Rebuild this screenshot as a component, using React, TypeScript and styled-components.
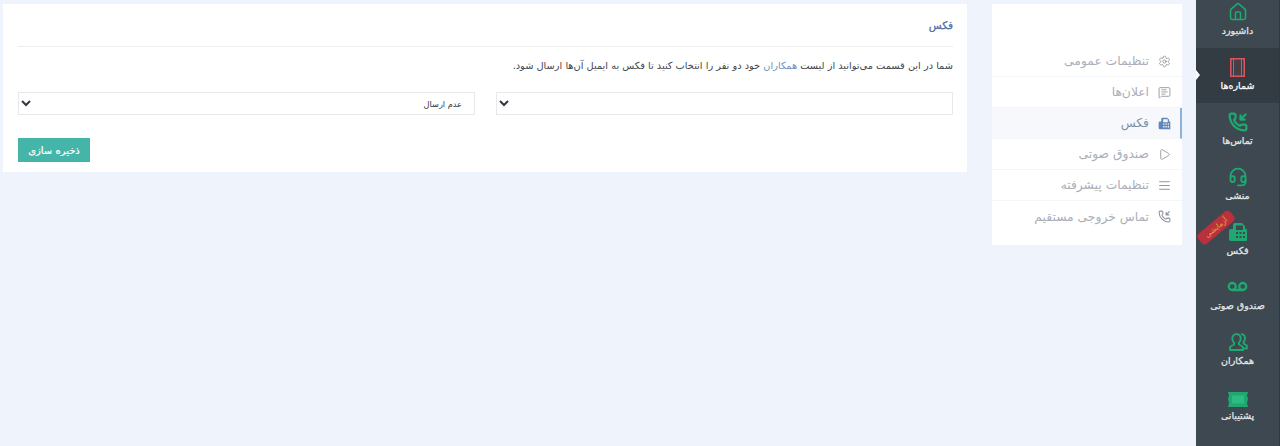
import React from "react";
import styled, { createGlobalStyle } from "styled-components";
import { Settings, MessageSquareText, Play, AlignJustify, Home, Headset, Voicemail } from "lucide-react";

const GlobalStyle = createGlobalStyle`
  html, body {
    margin: 0;
    height: 446px;
    overflow: hidden;
    background: #eff3fb;
    font-family: "DejaVu Sans", "Noto Sans", sans-serif;
  }
`;

const Page = styled.div`
  display: flex;
  direction: rtl;
  height: 446px;
  overflow: hidden;
`;

const Sidebar = styled.nav`
  width: 83px;
  flex: none;
  background: #3d4850;
  border-right: 1px solid #2f383e;
  overflow: hidden;
`;

const SidebarList = styled.div`
  margin-top: -7px;
  display: flex;
  flex-direction: column;
`;

const SidebarItem = styled.a<{ $active?: boolean }>`
  position: relative;
  height: 55px;
  display: flex;
  flex-direction: column;
  align-items: center;
  justify-content: flex-end;
  padding-bottom: 12px;
  box-sizing: border-box;
  gap: 3px;
  font-size: 9.5px;
  -webkit-text-stroke: 0.25px currentColor;
  white-space: nowrap;
  background: ${(p) => (p.$active ? "#333c43" : "transparent")};
  color: ${(p) => (p.$active ? "#ffffff" : "#e4e8ea")};
  svg {
    color: #1fa871;
  }
  ${(p) =>
    p.$active &&
    `&::before {
      content: "";
      position: absolute;
      left: 0;
      top: 22px;
      border-left: 4px solid #ffffff;
      border-top: 5px solid transparent;
      border-bottom: 5px solid transparent;
    }`}
`;

const Ribbon = styled.span`
  position: absolute;
  left: -1px;
  top: 8px;
  width: 42px;
  height: 13px;
  line-height: 13px;
  border-radius: 4px;
  background: #b9313c;
  color: #eda23c;
  font-size: 7.5px;
  -webkit-text-stroke: 0;
  text-align: center;
  transform: rotate(-40deg);
`;

const SideMenu = styled.aside`
  width: 190px;
  height: 241px;
  flex: none;
  margin: 4px 14px 0 25px;
  padding-top: 42px;
  box-sizing: border-box;
  background: #ffffff;
`;

const MenuRow = styled.a<{ $active?: boolean }>`
  height: 31px;
  display: flex;
  align-items: center;
  gap: 9px;
  box-sizing: border-box;
  font-size: 12.3px;
  white-space: nowrap;
  border-bottom: 1px solid #f4f5f8;
  background: ${(p) => (p.$active ? "#f6f8fc" : "#ffffff")};
  border-right: ${(p) => (p.$active ? "2px solid #8fb0d8" : "0")};
  padding-right: ${(p) => (p.$active ? "9px" : "11px")};
  color: ${(p) => (p.$active ? "#7d8fa8" : "#a9aeb8")};
  svg {
    color: ${(p) => (p.$active ? "#5f88b8" : "#8f949c")};
    flex: none;
  }
  &:last-child {
    border-bottom: 0;
  }
`;

const MainCard = styled.main`
  width: 964px;
  height: 168px;
  flex: none;
  margin-top: 4px;
  padding: 0 14px 0 15px;
  box-sizing: border-box;
  background: #ffffff;
`;

const Title = styled.h2`
  margin: 0;
  height: 42px;
  line-height: 42px;
  font-size: 10.5px;
  font-weight: 400;
  -webkit-text-stroke: 0.3px currentColor;
  color: #4f6f9f;
  border-bottom: 1px solid #eceef1;
`;

const Description = styled.p`
  margin: 12px 0 0;
  line-height: 14px;
  font-size: 9.8px;
  color: #3f454b;
  white-space: nowrap;
`;

const Link = styled.a`
  color: #6d93bd;
`;

const Fields = styled.div`
  display: flex;
  gap: 21px;
  margin-top: 19px;
`;

const Select = styled.select`
  flex: 1;
  min-width: 0;
  height: 23px;
  padding: 0 8px;
  font-family: inherit;
  font-size: 8.2px;
  color: #33383d;
  background: #ffffff;
  border: 1px solid #e6e8ec;
  border-radius: 0;
  direction: rtl;
`;

const Actions = styled.div`
  display: flex;
  justify-content: flex-end;
  margin-top: 23px;
`;

const SaveButton = styled.button`
  width: 72px;
  height: 24px;
  padding: 0;
  border: 0;
  background: #45b5aa;
  color: #ffffff;
  font-family: inherit;
  font-size: 10px;
  -webkit-text-stroke: 0.2px currentColor;
`;

const phonePath =
  "M13.832 16.568a1 1 0 0 0 1.213-.303l.355-.465A2 2 0 0 1 17 15h3a2 2 0 0 1 2 2v3a2 2 0 0 1-2 2A18 18 0 0 1 2 4a2 2 0 0 1 2-2h3a2 2 0 0 1 2 2v3a2 2 0 0 1-.8 1.6l-.468.351a1 1 0 0 0-.292 1.233 14 14 0 0 0 6.392 6.384";

const DoorIcon = () => (
  <svg width="15" height="19" viewBox="0 0 15 19" style={{ color: "#d9545c" }}>
    <rect x="0.8" y="0.8" width="13.4" height="17.4" fill="none" stroke="currentColor" strokeWidth="1.6" />
    <rect x="3.5" y="1" width="8" height="17" fill="#4a3e46" stroke="currentColor" strokeWidth="1" />
  </svg>
);

const FaxIcon = ({ size }: { size: number }) => (
  <svg width={size} height={size} viewBox="0 0 20 20">
    <path
      fill="currentColor"
      fillRule="evenodd"
      d="M7 1h7l3 3v3h1a1 1 0 0 1 1 1v10a1 1 0 0 1-1 1H3a2 2 0 0 1-2-2V9a2 2 0 0 1 2-2h2V3a2 2 0 0 1 2-2zM8 3.5V8h7V3.500H8zM8 10v2h2v-2H8zM11.500 10v2h2v-2h-2zM15 10v2h2v-2h-2zM8 14v2h2v-2H8zM11.500 14v2h2v-2h-2zM15 14v2h2v-2h-2z"
    />
  </svg>
);

const PhoneArrowIcon = ({ size, width }: { size: number; width: number }) => (
  <svg width={size} height={size} viewBox="0 0 24 24" fill="none" stroke="currentColor" strokeWidth={width} strokeLinecap="round" strokeLinejoin="round">
    <path d={phonePath} />
    <path d="M21 3l-6 6M15 4v5h5" />
  </svg>
);

const PeopleIcon = () => (
  <svg width="20" height="20" viewBox="0 0 20 20" fill="none" stroke="currentColor" strokeWidth="1.9" strokeLinejoin="round">
    <path d="M8.500 2a4.200 4.200 0 0 0-4.200 4.500c0 2 .8 3.400 1.800 4.300v1.700c-1.800.8-3.400 1.700-4.100 2.700V18h13v-2.800c-.7-1-2.300-1.900-4.100-2.700v-1.700c1-.9 1.800-2.300 1.800-4.300A4.200 4.200 0 0 0 8.500 2z" />
    <path d="M13 2.300c2.400-.4 4 1.500 4 3.900 0 1.600-.6 2.900-1.400 3.700v1.700c1.300.6 2.500 1.200 3.200 2v2.900h-3" />
  </svg>
);

const TicketIcon = () => (
  <svg width="20" height="15" viewBox="0 0 20 15">
    <path fill="currentColor" d="M0 0h20l-1 3.500 1 3.500-1 4 1 4H0l1-4-1-4 1-3.500L0 0z" />
    <rect x="4" y="3.500" width="12" height="8" fill="#2dbb7f" />
  </svg>
);

const navItems = [
  { label: "داشبورد", icon: <Home size={20} strokeWidth={1.9} /> },
  { label: "شماره‌ها", icon: <DoorIcon />, active: true },
  { label: "تماس‌ها", icon: <PhoneArrowIcon size={20} width={2.7} /> },
  { label: "منشی", icon: <Headset size={20} strokeWidth={2.3} /> },
  { label: "فکس", icon: <FaxIcon size={20} />, ribbon: "آزمایشی" },
  { label: "صندوق صوتی", icon: <Voicemail size={21} strokeWidth={2.6} /> },
  { label: "همکاران", icon: <PeopleIcon /> },
  { label: "پشتیبانی", icon: <TicketIcon /> },
];

const menuItems = [
  { label: "تنظیمات عمومی", icon: <Settings size={13} strokeWidth={1.6} /> },
  { label: "اعلان‌ها", icon: <MessageSquareText size={13} strokeWidth={1.6} /> },
  { label: "فکس", icon: <FaxIcon size={13} />, active: true },
  { label: "صندوق صوتی", icon: <Play size={13} strokeWidth={1.6} /> },
  { label: "تنظیمات پیشرفته", icon: <AlignJustify size={13} strokeWidth={1.8} /> },
  { label: "تماس خروجی مستقیم", icon: <PhoneArrowIcon size={13} width={2} /> },
];

export default function App() {
  return (
    <Page>
      <GlobalStyle />
      <Sidebar>
        <SidebarList>
          {navItems.map((item) => (
            <SidebarItem key={item.label} $active={item.active}>
              {item.ribbon && <Ribbon>{item.ribbon}</Ribbon>}
              {item.icon}
              <span>{item.label}</span>
            </SidebarItem>
          ))}
        </SidebarList>
      </Sidebar>
      <SideMenu>
        {menuItems.map((item) => (
          <MenuRow key={item.label} $active={item.active}>
            {item.icon}
            <span>{item.label}</span>
          </MenuRow>
        ))}
      </SideMenu>
      <MainCard>
        <Title>فکس</Title>
        <Description>
          شما در این قسمت می‌توانید از لیست <Link>همکاران</Link> خود دو نفر را انتخاب کنید تا
          فکس به ایمیل آن‌ها ارسال شود.
        </Description>
        <Fields>
          <Select defaultValue="">
            <option value=""></option>
          </Select>
          <Select defaultValue="none">
            <option value="none">عدم ارسال</option>
          </Select>
        </Fields>
        <Actions>
          <SaveButton>ذخیره سازی</SaveButton>
        </Actions>
      </MainCard>
    </Page>
  );
}
